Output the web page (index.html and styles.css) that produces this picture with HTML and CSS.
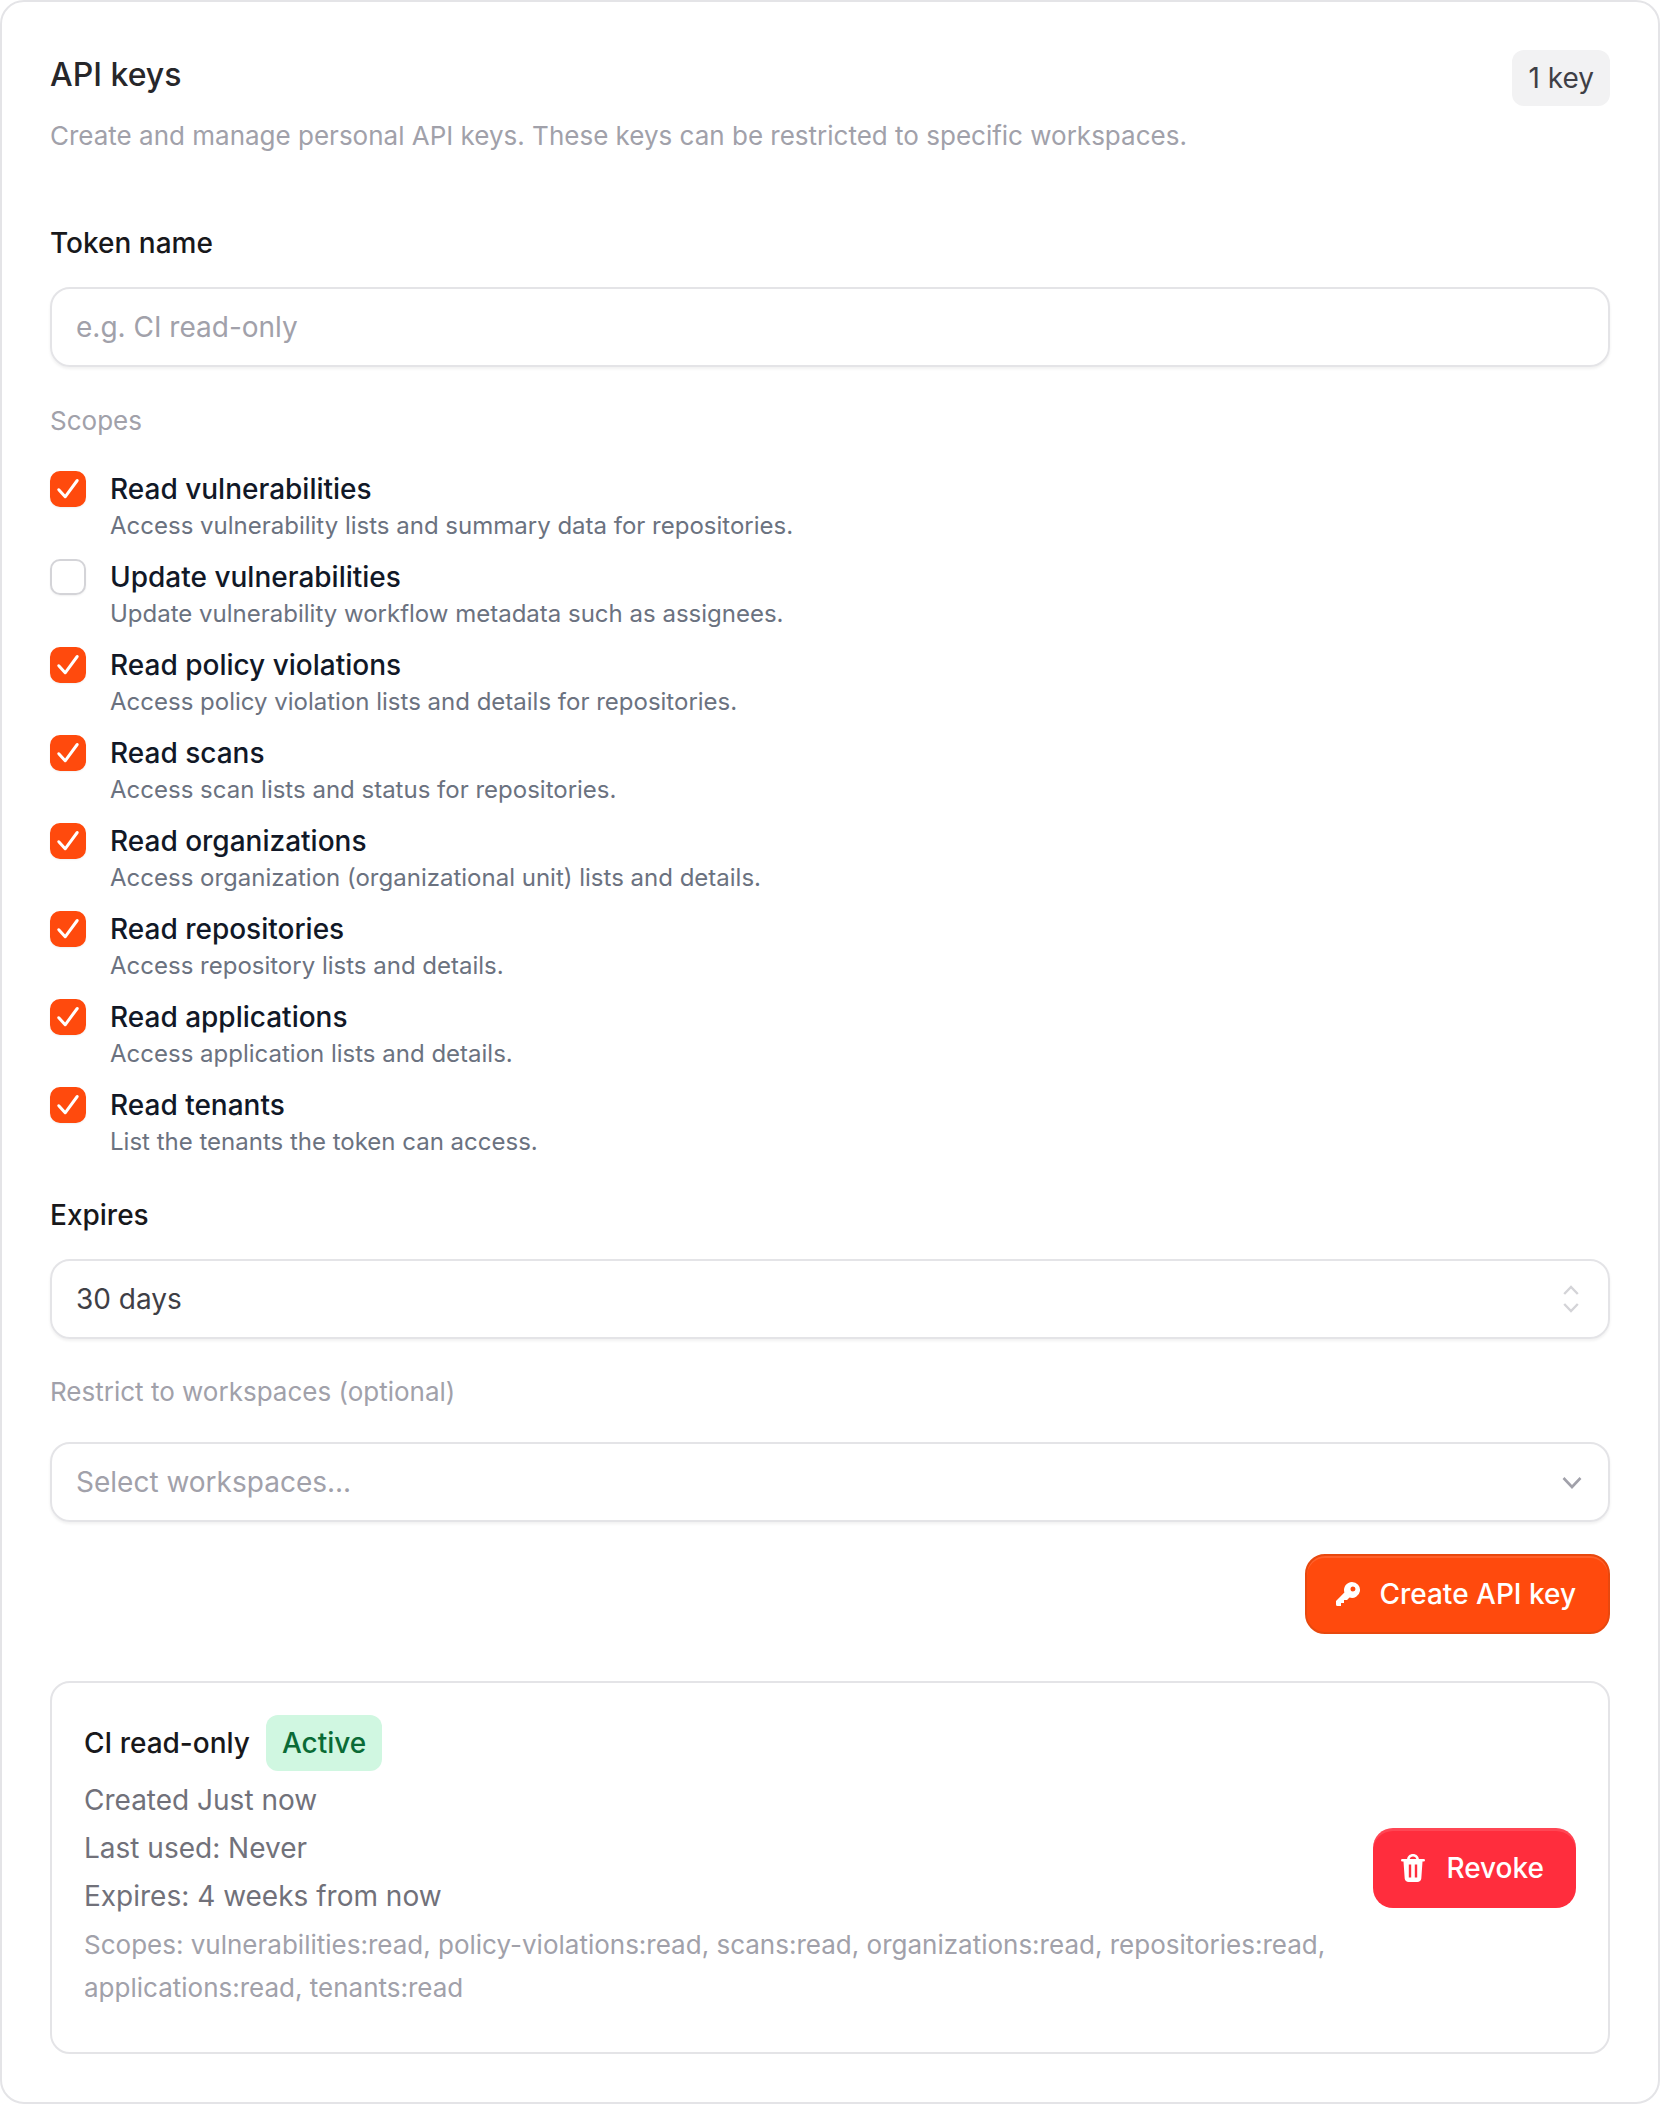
FILE: index.html
```html
<!DOCTYPE html>
<html lang="en">
<head>
    <meta charset="UTF-8">
    <title>API keys</title>
    <link rel="stylesheet" href="styles.css">
</head>
<body>
    <main class="card">
        <header class="card-head">
            <div>
                <h1 class="title">API keys</h1>
                <p class="subtitle">Create and manage personal API keys. These keys can be restricted to specific workspaces.</p>
            </div>
            <span class="count">1 key</span>
        </header>

        <label class="field-label token-label">Token name</label>
        <div class="input placeholder">e.g. CI read-only</div>

        <div class="muted-label scopes-label">Scopes</div>
        <div class="scopes">
            <div class="scope">
                <span class="box checked"><svg viewBox="0 0 24 24"><path d="M5.5 12.5l4.5 5L18.5 6"/></svg></span>
                <div>
                    <div class="scope-name">Read vulnerabilities</div>
                    <div class="scope-desc">Access vulnerability lists and summary data for repositories.</div>
                </div>
            </div>
            <div class="scope">
                <span class="box"></span>
                <div>
                    <div class="scope-name">Update vulnerabilities</div>
                    <div class="scope-desc">Update vulnerability workflow metadata such as assignees.</div>
                </div>
            </div>
            <div class="scope">
                <span class="box checked"><svg viewBox="0 0 24 24"><path d="M5.5 12.5l4.5 5L18.5 6"/></svg></span>
                <div>
                    <div class="scope-name">Read policy violations</div>
                    <div class="scope-desc">Access policy violation lists and details for repositories.</div>
                </div>
            </div>
            <div class="scope">
                <span class="box checked"><svg viewBox="0 0 24 24"><path d="M5.5 12.5l4.5 5L18.5 6"/></svg></span>
                <div>
                    <div class="scope-name">Read scans</div>
                    <div class="scope-desc">Access scan lists and status for repositories.</div>
                </div>
            </div>
            <div class="scope">
                <span class="box checked"><svg viewBox="0 0 24 24"><path d="M5.5 12.5l4.5 5L18.5 6"/></svg></span>
                <div>
                    <div class="scope-name">Read organizations</div>
                    <div class="scope-desc">Access organization (organizational unit) lists and details.</div>
                </div>
            </div>
            <div class="scope">
                <span class="box checked"><svg viewBox="0 0 24 24"><path d="M5.5 12.5l4.5 5L18.5 6"/></svg></span>
                <div>
                    <div class="scope-name">Read repositories</div>
                    <div class="scope-desc">Access repository lists and details.</div>
                </div>
            </div>
            <div class="scope">
                <span class="box checked"><svg viewBox="0 0 24 24"><path d="M5.5 12.5l4.5 5L18.5 6"/></svg></span>
                <div>
                    <div class="scope-name">Read applications</div>
                    <div class="scope-desc">Access application lists and details.</div>
                </div>
            </div>
            <div class="scope">
                <span class="box checked"><svg viewBox="0 0 24 24"><path d="M5.5 12.5l4.5 5L18.5 6"/></svg></span>
                <div>
                    <div class="scope-name">Read tenants</div>
                    <div class="scope-desc">List the tenants the token can access.</div>
                </div>
            </div>
        </div>

        <label class="field-label expires-label">Expires</label>
        <div class="input select">
            <span>30 days</span>
            <svg class="updown" viewBox="0 0 16 28"><path d="M1.2 9L8 2l6.8 7M1.2 19L8 26l6.8-7"/></svg>
        </div>

        <div class="muted-label restrict-label">Restrict to workspaces (optional)</div>
        <div class="input select placeholder restrict-input">
            <span>Select workspaces...</span>
            <svg class="chevron" viewBox="0 0 20 13"><path d="M1.5 2L10 11l8.5-9"/></svg>
        </div>

        <div class="actions">
            <button class="btn btn-primary">
                <svg class="icon-key" viewBox="0 0 24 24"><path fill-rule="evenodd" d="M16 0a8 8 0 1 1-2.5 15.6L11 18H8v3H5v3H1.5A1.5 1.5 0 0 1 0 22.5v-3.4L8.4 10.5A8 8 0 0 1 16 0ZM17 4.5a2.5 2.5 0 1 0 0 5 2.5 2.5 0 0 0 0-5Z"/></svg>
                Create API key
            </button>
        </div>

        <section class="key">
            <div class="key-info">
                <div class="key-head">
                    <span class="key-name">CI read-only</span>
                    <span class="status">Active</span>
                </div>
                <div class="key-meta">Created Just now</div>
                <div class="key-meta">Last used: Never</div>
                <div class="key-meta">Expires: 4 weeks from now</div>
                <div class="key-scopes">Scopes: vulnerabilities:read, policy-violations:read, scans:read, organizations:read, repositories:read, applications:read, tenants:read</div>
            </div>
            <button class="btn btn-danger">
                <svg class="icon-trash" viewBox="0 0 24 28"><path fill-rule="evenodd" d="M12 0C8.7 0 6.4 2.200 6.100 5H1.300a1.300 1.300 0 0 0 0 2.600h1.200l1.200 16.800C3.900 26.500 5.600 28 7.600 28h8.800c2 0 3.700-1.500 3.900-3.600l1.200-16.800h1.200a1.300 1.300 0 0 0 0-2.600h-4.800C17.600 2.200 15.300 0 12 0Zm0 2.600c1.800 0 3 1 3.300 2.400H8.700c.3-1.400 1.500-2.400 3.300-2.400ZM7.800 10.500h2.400v13H7.800v-13Zm6 0h2.400v13h-2.400v-13Z"/></svg>
                Revoke
            </button>
        </section>
    </main>
</body>
</html>
```

FILE: styles.css
```css
* {
    box-sizing: border-box;
}

body {
    margin: 0;
    background: #fff;
    font-family: Inter, "Noto Sans", sans-serif;
    font-size: 28px;
    color: #18181b;
}

.card {
    width: 1660px;
    height: 2104px;
    padding: 48px;
    border: 2px solid #e4e4e7;
    border-radius: 24px;
}

.card-head {
    display: flex;
    justify-content: space-between;
    align-items: flex-start;
}

.title {
    margin: 1px 0 0;
    font-size: 32px;
    line-height: 48px;
    font-weight: 500;
    color: #27272a;
}

.subtitle {
    margin: 13px 0 0;
    font-size: 26px;
    line-height: 48px;
    color: #a1a1aa;
}

.count {
    padding: 0 16px;
    height: 56px;
    line-height: 56px;
    background: #f2f2f3;
    border-radius: 12px;
    color: #3f3f46;
}

.field-label {
    display: block;
    font-size: 28px;
    line-height: 40px;
    font-weight: 500;
    color: #18181b;
}

.token-label {
    margin-top: 63px;
}

.input {
    height: 80px;
    margin-top: 24px;
    padding: 0 24px;
    display: flex;
    align-items: center;
    justify-content: space-between;
    border: 2px solid #e4e4e7;
    border-radius: 20px;
    box-shadow: 0 2px 3px rgba(0, 0, 0, 0.06);
    font-size: 28px;
    color: #3f3f46;
}

.placeholder {
    color: #a1a1aa;
}

.muted-label {
    font-size: 26px;
    line-height: 40px;
    color: #a1a1aa;
}

.scopes-label {
    margin-top: 34px;
}

.scopes {
    margin-top: 30px;
}

.scope {
    display: flex;
    gap: 24px;
    height: 88px;
}

.box {
    flex: none;
    width: 36px;
    height: 36px;
    border: 2px solid #d4d4d8;
    border-radius: 10px;
    box-shadow: 0 1px 2px rgba(0, 0, 0, 0.06);
}

.box.checked {
    background: #ff4a0d;
    border-color: #ff4a0d;
    display: flex;
    align-items: center;
    justify-content: center;
}

.box svg {
    flex: none;
    width: 34px;
    height: 34px;
    fill: none;
    stroke: #fff;
    stroke-width: 2.1;
    stroke-linecap: round;
    stroke-linejoin: round;
}

.scope-name {
    font-size: 28px;
    line-height: 36px;
    font-weight: 500;
    color: #111827;
}

.scope-desc {
    margin-top: 1px;
    font-size: 24px;
    line-height: 36px;
    color: #6b7280;
}

.expires-label {
    margin-top: 20px;
}

.updown {
    width: 16px;
    height: 28px;
    margin-right: 5px;
    fill: none;
    stroke: #d4d4d8;
    stroke-width: 2.4;
}

.chevron {
    width: 20px;
    height: 13px;
    margin-right: 2px;
    fill: none;
    stroke: #a1a1aa;
    stroke-width: 2.6;
}

.restrict-label {
    margin-top: 33px;
}

.restrict-input {
    margin-top: 30px;
}

.actions {
    display: flex;
    justify-content: flex-end;
    margin-top: 32px;
}

.btn {
    display: inline-flex;
    align-items: center;
    height: 80px;
    border-radius: 20px;
    font-family: inherit;
    font-size: 28px;
    font-weight: 500;
    color: #fff;
}

.btn svg {
    fill: #fff;
}

.icon-key {
    width: 24px;
    height: 24px;
}

.icon-trash {
    width: 24px;
    height: 28px;
}

.btn-primary {
    gap: 19px;
    padding: 0 32px 0 29px;
    background: #ff4a0d;
    border: 2px solid #e8480e;
    box-shadow: inset 0 2px 0 rgba(255, 255, 255, 0.12);
}

.btn-danger {
    flex: none;
    gap: 21px;
    padding: 0 32px 0 28px;
    background: #ff2d3d;
    border: none;
    box-shadow: inset 0 3px 0 rgba(255, 255, 255, 0.12);
}

.key {
    display: flex;
    align-items: center;
    gap: 32px;
    margin-top: 47px;
    padding: 32px;
    border: 2px solid #e4e4e7;
    border-radius: 20px;
}

.key-info {
    padding-bottom: 11px;
}

.key-head {
    display: flex;
    align-items: center;
    gap: 16px;
    margin-bottom: 5px;
}

.key-name {
    font-weight: 500;
    color: #18181b;
}

.status {
    height: 56px;
    line-height: 56px;
    padding: 0 16px;
    border-radius: 12px;
    background: #d0f7e1;
    color: #0a6b36;
    font-weight: 500;
}

.key-meta {
    line-height: 48px;
    color: #71717a;
}

.key-scopes {
    margin-top: 3px;
    font-size: 26px;
    line-height: 43px;
    color: #a1a1aa;
}
```
